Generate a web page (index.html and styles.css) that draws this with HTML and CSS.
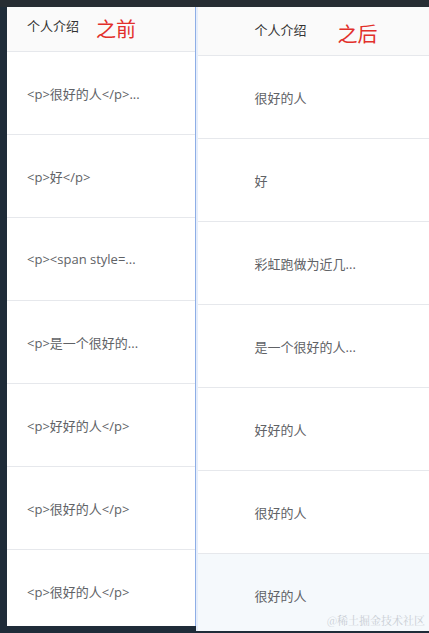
FILE: index.html
```html
<!DOCTYPE html>
<html lang="zh-CN">
<head>
    <meta charset="UTF-8">
    <meta name="viewport" content="width=device-width, initial-scale=1.0">
    <title>之前 / 之后</title>
    <link rel="stylesheet" href="styles.css">
</head>
<body>
    <div class="stage">
        <!-- 之前：直接输出富文本 -->
        <div class="panel panel-before">
            <div class="cell head">个人介绍</div>
            <span class="mark">之前</span>
            <div class="cell">&lt;p&gt;很好的人&lt;/p&gt;...</div>
            <div class="cell">&lt;p&gt;好&lt;/p&gt;</div>
            <div class="cell">&lt;p&gt;&lt;span style=...</div>
            <div class="cell">&lt;p&gt;是一个很好的...</div>
            <div class="cell">&lt;p&gt;好好的人&lt;/p&gt;</div>
            <div class="cell">&lt;p&gt;很好的人&lt;/p&gt;</div>
            <div class="cell">&lt;p&gt;很好的人&lt;/p&gt;</div>
        </div>

        <!-- 之后：去掉标签 -->
        <div class="panel panel-after">
            <div class="cell head">个人介绍</div>
            <span class="mark">之后</span>
            <div class="cell">很好的人</div>
            <div class="cell">好</div>
            <div class="cell">彩虹跑做为近几...</div>
            <div class="cell">是一个很好的人...</div>
            <div class="cell">好好的人</div>
            <div class="cell">很好的人</div>
            <div class="cell hover">很好的人</div>
            <span class="watermark">@稀土掘金技术社区</span>
        </div>
    </div>
</body>
</html>
```

FILE: styles.css
```css
html, body {
    margin: 0;
    height: 100%;
}
body {
    background: #1f2c39;
    font-family: "Open Sans", "Noto Sans CJK SC", sans-serif;
    font-size: 13px;
    color: #606266;
    overflow: hidden;
}
.stage {
    display: flex;
    align-items: flex-start;
    padding-top: 7px;
    background: linear-gradient(#272d33 0, #272d33 7px, transparent 7px);
}
.panel {
    position: relative;
    display: flex;
    flex-direction: column;
    background: #fff;
    overflow: hidden;
}
.panel-before {
    margin-left: 7px;
    width: 188px;
    height: 619px;
    border-right: 1px solid #8eaee6;
}
.panel-after {
    width: 232px;
    height: 624px;
    border-left: 2px solid #e6eefb;
}
.cell {
    flex: none;
    display: flex;
    align-items: center;
    height: 82px;
    border-bottom: 1px solid #e6e8ec;
    white-space: nowrap;
}
.panel-before .cell {
    padding-left: 20px;
}
.panel-after .cell {
    padding-left: 57px;
}
.cell.head {
    background: #fafafa;
    color: #333;
    align-items: flex-start;
}
.panel-before .cell.head {
    height: 44px;
    line-height: 38px;
}
.panel-after .cell.head {
    height: 48px;
    line-height: 46px;
}
.cell.hover {
    background: #f5f9fc;
}
.mark {
    position: absolute;
    top: 11px;
    color: #e2302b;
    font-size: 20px;
    line-height: 24px;
}
.panel-before .mark {
    left: 89px;
}
.panel-after .mark {
    left: 140px;
    top: 16px;
}
.watermark {
    position: absolute;
    right: 4px;
    bottom: 3px;
    font-family: "Noto Serif CJK SC", "Noto Sans CJK SC", serif;
    font-size: 11px;
    color: #c9ced4;
}
```
